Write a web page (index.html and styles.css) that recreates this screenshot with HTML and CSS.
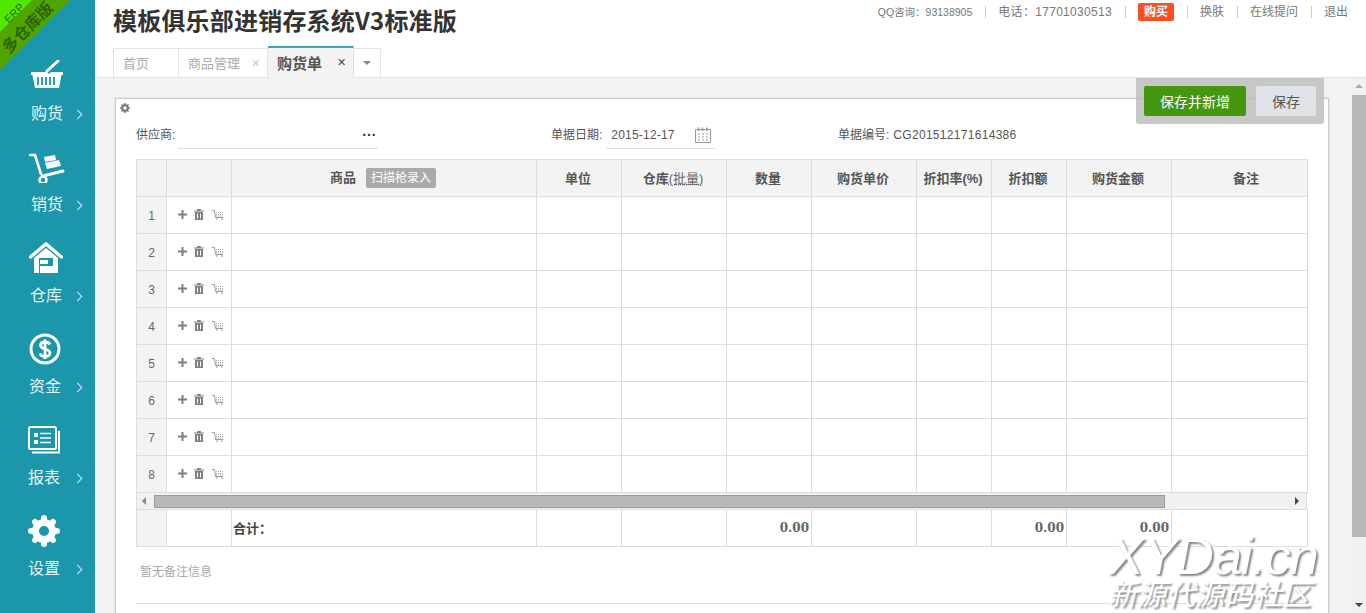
FILE: index.html
```html
<!DOCTYPE html>
<html lang="zh-CN">
<head>
  <meta charset="UTF-8">
  <title>模板俱乐部进销存系统V3标准版</title>
  <link rel="stylesheet" href="styles.css">
</head>
<body>

  <aside class="sidebar">
    <div class="ribbon">
      <svg width="70" height="70" viewBox="0 0 70 70"><path d="M0 0H70L0 70Z" fill="#4fa600"/><path d="M0 0H32L0 32Z" fill="#4fe800"/></svg>
      <span class="ribbon-erp">ERP</span>
      <span class="ribbon-text">多仓库版</span>
    </div>
    <nav class="nav">
      <a class="nav-item">
        <svg class="nav-icon" width="34" height="30" viewBox="0 2 34 30"><path d="M1 13H33V16H31.500L29 29H5L2.500 16H1Z" fill="#fff"/><path d="M17 13L28 1.500" stroke="#1b96ab" stroke-width="6"/><path d="M17 12L28 2" stroke="#fff" stroke-width="3" stroke-linecap="round"/><path d="M8 18V26M12 18V26M16 18V26M20 18V26M24 18V26" stroke="#1b96ab" stroke-width="1.800"/></svg>
        <span class="nav-label">购货</span><i class="chev"></i>
      </a>
      <a class="nav-item">
        <svg class="nav-icon" width="36" height="32" viewBox="0 -2 36 32"><path d="M1 2H6L12 21" fill="none" stroke="#fff" stroke-width="2.600" stroke-linecap="round"/><path d="M14 23L34 18" stroke="#fff" stroke-width="3" stroke-linecap="round"/><path d="M15 4L26 2L27 7L16 9Z M16 10L30 7L32 13L18 16Z" fill="#fff"/><circle cx="14" cy="27" r="3.500" fill="none" stroke="#fff" stroke-width="2.500"/></svg>
        <span class="nav-label">销货</span><i class="chev"></i>
      </a>
      <a class="nav-item">
        <svg class="nav-icon" width="34" height="32" viewBox="0 0 34 32"><path d="M1.500 15L17 2L32.500 15" fill="none" stroke="#fff" stroke-width="3.500" stroke-linecap="round"/><path d="M5 16L17 6L29 16V31H5Z" fill="#fff"/><path d="M10 16H24V31H10Z" fill="#1b96ab"/><path d="M11 18H19V22H11ZM11 24H24V31H11Z" fill="#fff"/></svg>
        <span class="nav-label">仓库</span><i class="chev"></i>
      </a>
      <a class="nav-item">
        <svg class="nav-icon" width="32" height="32" viewBox="0 0 32 32"><circle cx="16" cy="16" r="14" fill="none" stroke="#fff" stroke-width="3"/><path d="M21 11.500C20 9.500 18 9 16 9C13 9 11.500 10.500 11.500 12.500C11.500 17 21 15 21 20C21 22 19 23.500 16 23.500C13.500 23.500 11.500 22.500 11 20.500M16 6.500V26" fill="none" stroke="#fff" stroke-width="2.800"/></svg>
        <span class="nav-label">资金</span><i class="chev"></i>
      </a>
      <a class="nav-item">
        <svg class="nav-icon" width="32" height="28" viewBox="0 0 32 28"><rect x="1" y="1" width="27" height="22" rx="1.500" fill="none" stroke="#fff" stroke-width="2"/><path d="M31 5V26.500H4" fill="none" stroke="#fff" stroke-width="2"/><path d="M6 7H10V11H6ZM6 14H10V18H6Z" fill="#fff"/><path d="M12 7.500H23M12 12H23M12 16.500H23" stroke="#fff" stroke-width="1.300"/></svg>
        <span class="nav-label">报表</span><i class="chev"></i>
      </a>
      <a class="nav-item">
        <svg class="nav-icon" width="34" height="32" viewBox="0 0 34 32"><circle cx="17" cy="16" r="8.500" fill="none" stroke="#fff" stroke-width="7"/><g stroke="#fff" stroke-width="6" stroke-linecap="round"><path d="M17 3V5M17 27V29M4 16H6M28 16H30M8 7L9.500 8.500M24.500 23.500L26 25M26 7L24.500 8.500M9.500 23.500L8 25"/></g></svg>
        <span class="nav-label">设置</span><i class="chev"></i>
      </a>
    </nav>
  </aside>

  <div class="main">
    <header class="header">
      <div class="header-top">
        <h1 class="title">模板俱乐部进销存系统V3标准版</h1>
        <ul class="top-links">
          <li class="small">QQ咨询：93138905</li>
          <li class="phone">电话：17701030513</li>
          <li><span class="buy">购买</span></li>
          <li>换肤</li>
          <li>在线提问</li>
          <li>退出</li>
        </ul>
      </div>
      <div class="tabs">
        <a class="tab tab-home">首页</a>
        <a class="tab tab-goods">商品管理<i class="tab-x">✕</i></a>
        <a class="tab tab-active">购货单<i class="tab-x">✕</i></a>
        <a class="tab tab-more"><i class="caret"></i></a>
      </div>
    </header>

    <div class="content">
      <div class="page">
        <div class="card">
          <svg class="gear" width="10" height="10" viewBox="0 0 10 10"><circle cx="5" cy="5" r="2.800" fill="none" stroke="#777" stroke-width="2"/><path d="M5 0V10M0 5H10M1.500 1.500L8.500 8.500M8.500 1.500L1.500 8.500" stroke="#777" stroke-width="1.500" stroke-dasharray="2 6 2"/></svg>
          <div class="bill-row">
            <div class="field field-supplier">
              <label>供应商:</label>
              <div class="line-input supplier-input"><span class="dots">···</span></div>
            </div>
            <div class="field field-date">
              <label>单据日期:</label>
              <div class="line-input date-input">
                <span class="date-val">2015-12-17</span>
                <svg width="16" height="16" viewBox="0 0 16 16"><path d="M.5 2.500H15.500V15.500H.5Z" fill="none" stroke="#999"/><path d="M3.500 .5V4M7.500 .5V4M12 .5V4" stroke="#999" stroke-width="1.500"/><path d="M3 7H5M7 7H9M11 7H13M3 10H5M7 10H9M11 10H13M3 13H5M7 13H9M11 13H13" stroke="#999"/></svg>
              </div>
            </div>
            <div class="field field-no">
              <label>单据编号:</label>
              <span>CG201512171614386</span>
            </div>
          </div>

          <table class="grid grid-head">
            <colgroup><col class="c-no"><col class="c-op"><col class="c-goods"><col class="c-unit"><col class="c-store"><col class="c-qty"><col class="c-price"><col class="c-rate"><col class="c-disc"><col class="c-amount"><col class="c-note"></colgroup>
            <thead>
              <tr>
                <th></th><th></th>
                <th>商品<span class="scan">扫描枪录入</span></th>
                <th>单位</th>
                <th>仓库<span class="batch">(批量)</span></th>
                <th>数量</th><th>购货单价</th><th>折扣率(%)</th><th>折扣额</th><th>购货金额</th><th class="th-note">备注</th>
              </tr>
            </thead>
            <tbody id="rows"></tbody>
          </table>

          <div class="hscroll">
            <span class="arrow-left"></span>
            <div class="hscroll-thumb"></div>
            <span class="arrow-right"></span>
          </div>

          <table class="grid grid-foot">
            <colgroup><col class="c-no"><col class="c-op"><col class="c-goods"><col class="c-unit"><col class="c-store"><col class="c-qty"><col class="c-price"><col class="c-rate"><col class="c-disc"><col class="c-amount"><col class="c-note"></colgroup>
            <tr>
              <td class="num"></td><td></td>
              <td class="sum-label">合计：</td>
              <td></td><td></td>
              <td class="sum">0.00</td>
              <td></td><td></td>
              <td class="sum">0.00</td>
              <td class="sum">0.00</td>
              <td></td>
            </tr>
          </table>

          <p class="remark">暂无备注信息</p>
        </div>
      </div>

      <div class="vscroll">
        <span class="arrow-up"></span>
        <div class="vscroll-thumb"></div>
        <span class="arrow-down"></span>
      </div>

      <div class="save-bar">
        <button class="btn btn-green">保存并新增</button>
        <button class="btn btn-gray">保存</button>
      </div>
    </div>
  </div>

  <div class="watermark">
    <div class="wm-big">XYDai.cn</div>
    <div class="wm-small">新源代源码社区</div>
  </div>

  <script>
    const rows = document.getElementById('rows');
    const ops = `
      <svg width="9" height="9" viewBox="0 0 9 9"><path d="M4.500 0V9M0 4.500H9" stroke="#808080" stroke-width="2"/></svg>
      <svg width="10" height="11" viewBox="0 0 10 11"><path d="M0 2H10M3.500 1.500V.5H6.500V1.500" stroke="#808080" stroke-width="1"/><path d="M1 3H9V11H1Z" fill="#808080"/><path d="M3.500 4.500V9.500M6.500 4.500V9.500" stroke="#fff"/></svg>
      <svg width="12" height="10" viewBox="0 0 12 10"><path d="M0 .5H2.500L3.500 7.500H11" fill="none" stroke="#999"/><path d="M4 2.500H12M4 4.500H12M4 6H12" stroke="#aaa" stroke-dasharray="1 1"/><path d="M4 9H6M9 9H11" stroke="#999"/></svg>`;
    for (let i = 1; i <= 8; i++) {
      let cells = '<td class="num">' + i + '</td><td class="ops">' + ops + '</td>';
      for (let j = 0; j < 9; j++) cells += '<td></td>';
      rows.insertAdjacentHTML('beforeend', '<tr>' + cells + '</tr>');
    }
  </script>

</body>
</html>
```

FILE: styles.css
```css
* { box-sizing: border-box; }
html, body { height: 100%; }
body { margin: 0; display: flex; height: 613px; overflow: hidden; font-family: "Liberation Sans", "Noto Sans CJK SC", sans-serif; font-size: 12px; color: #555; background: #fff; }
ul { list-style: none; margin: 0; padding: 0; }
i { font-style: normal; }

/* sidebar */
.sidebar { width: 95px; flex: none; background: #1b96ab; position: relative; overflow: hidden; }
.ribbon { position: absolute; left: 0; top: 0; width: 70px; height: 70px; }
.ribbon svg { display: block; }
.ribbon-erp { position: absolute; left: -1px; top: 7px; width: 30px; text-align: center; line-height: 12px; transform: rotate(-45deg); font-size: 11px; color: #2b7000; }
.ribbon-text { position: absolute; left: -6px; top: 17px; width: 68px; text-align: center; line-height: 22px; transform: rotate(-45deg); font-size: 16px; font-weight: bold; color: #2c6408; white-space: nowrap; }
.nav { padding-top: 60px; display: flex; flex-direction: column; }
.nav-item { height: 91px; display: flex; flex-direction: column; align-items: center; color: #e6f4f6; position: relative; }
.nav-item:nth-child(1), .nav-item:nth-child(2) { padding-right: 1px; }
.nav-item:nth-child(3) { padding-right: 3px; }
.nav-item:nth-child(4) { padding-right: 5px; }
.nav-item:nth-child(5), .nav-item:nth-child(6) { padding-right: 7px; }
.nav-icon { display: block; height: 32px; }
.nav-label { display: block; margin-top: 11px; font-size: 16px; line-height: 22px; white-space: nowrap; }
.chev { position: absolute; left: 74px; top: 51px; width: 7px; height: 7px; border-top: 1px solid #d5e9ed; border-right: 1px solid #d5e9ed; transform: rotate(45deg); }

/* header */
.main { flex: 1; min-width: 0; display: flex; flex-direction: column; }
.header { height: 78px; flex: none; border-bottom: 1px solid #e3e3e3; padding-left: 18px; display: flex; flex-direction: column; justify-content: space-between; }
.header-top { display: flex; justify-content: space-between; align-items: flex-start; }
.title { margin: 5px 0 0; font-size: 24px; line-height: 30px; font-weight: bold; letter-spacing: .2px; color: #333; font-family: "Noto Sans CJK SC", sans-serif; }
.top-links { display: flex; align-items: center; margin: 3px 18px 0 0; color: #777; height: 17px; }
.top-links li { padding: 0 13px 0 12px; border-left: 1px solid #ccc; line-height: 12px; white-space: nowrap; }
.top-links li:first-child { border-left: 0; }
.top-links li:last-child { padding-right: 0; }
.top-links .small { font-size: 10.500px; }
.top-links .phone { letter-spacing: .3px; }
.buy { display: inline-block; background: #fb5022; color: #fff; font-weight: bold; padding: 0 6px; height: 18px; line-height: 18px; margin: -3px 0; border-radius: 2px; font-size: 12px; }

.tabs { display: flex; align-items: flex-end; height: 32px; }
.tab { height: 29px; display: flex; align-items: center; padding-bottom: 2px; border: 1px solid #e3e3e3; border-bottom: 0; border-left: 0; color: #aaa; font-size: 13px; padding-left: 9px; position: relative; }
.tab-home { width: 66px; border-left: 1px solid #e3e3e3; border-radius: 2px 0 0 0; }
.tab-goods { width: 89px; }
.tab-active { width: 86px; height: 32px; background: #f3f3f3; border-top: 2px solid #3aa9bf; border-right: 1px solid #e3e3e3; color: #555; font-size: 15px; font-weight: bold; margin-bottom: -1px; }
.tab-more { width: 27px; border-radius: 0 2px 0 0; justify-content: center; padding: 0; }
.tab-x { position: absolute; right: 7px; top: 8px; font-size: 11px; color: #b9cde3; }
.tab-active .tab-x { color: #444; font-weight: normal; top: 8px; }
.caret { width: 0; height: 0; border: 4px solid transparent; border-top-color: #888; border-bottom: 0; }

/* content */
.content { flex: 1; min-height: 0; display: flex; background: #f3f3f3; position: relative; }
.page { flex: 1; min-width: 0; padding: 20px 22px 0 20px; overflow: hidden; }
.card { background: #fff; border: 1px solid #ccc; border-bottom: 0; box-shadow: 0 0 2px #ccc; height: 520px; padding: 0 21px 0 20px; position: relative; }
.gear { position: absolute; left: 4px; top: 4px; }
.bill-row { display: flex; height: 60px; align-items: flex-start; padding-top: 22px; }
.field { display: flex; align-items: flex-start; line-height: 28px; white-space: nowrap; }
.field label { color: #555; }
.line-input { border-bottom: 1px solid #d7dee5; height: 28px; display: flex; align-items: center; justify-content: space-between; }
.field-supplier { width: 415px; }
.supplier-input { width: 200px; margin-left: 3px; padding-right: 2px; justify-content: flex-end; }
.dots { font-weight: bold; color: #333; font-size: 14px; }
.field-date { width: 287px; }
.date-input { width: 110px; margin-left: 4px; padding: 0 5px; }
.date-val { letter-spacing: .2px; }
.field-no span { margin-left: 4px; letter-spacing: .3px; }
.grid { border-collapse: collapse; table-layout: fixed; width: 1171px; }
.c-no { width: 30px; } .c-op { width: 65px; } .c-goods { width: 305px; } .c-unit { width: 85px; } .c-store { width: 105px; }
.c-qty { width: 85px; } .c-price { width: 105px; } .c-rate { width: 75px; } .c-disc { width: 75px; } .c-amount { width: 105px; } .c-note { width: 136px; }
.grid th, .grid td { border: 1px solid #d7dee5; padding: 0; height: 37px; }
.grid th { background: #f3f3f3; font-size: 13px; color: #555; font-weight: bold; padding: 0 2px 1px 0; }
.grid .th-note { padding-left: 15px; }
.num { background: #f3f3f3; text-align: center; color: #666; padding-top: 2px !important; }
.ops { padding-left: 11px !important; padding-bottom: 2px !important; white-space: nowrap; }
.ops svg { margin-right: 4px; vertical-align: middle; }
.scan { display: inline-block; margin-left: 10px; padding: 0 5px; height: 20px; line-height: 20px; background: #aaa; color: #fff; font-weight: normal; font-size: 12px; border-radius: 2px; }
.batch { font-weight: normal; color: #666; text-decoration: underline dotted; }
.hscroll { width: 1171px; height: 16px; background: #f1f1f1; border: 1px solid #d7dee5; border-top: 0; border-bottom: 0; display: flex; align-items: center; position: relative; }
.hscroll-thumb { width: 1011px; height: 13px; margin-left: 17px; background: #b9b9b9; border: 1px solid #9a9a9a; }
.arrow-left, .arrow-right { position: absolute; width: 0; height: 0; border: 4px solid transparent; }
.arrow-left { left: 5px; border-right-color: #888; border-left: 0; }
.arrow-right { right: 7px; border-left-color: #444; border-right: 0; }
.sum { text-align: right; padding-right: 2px !important; font-family: "DejaVu Serif", serif; font-weight: bold; font-size: 12px; color: #666; }
.sum-label { font-weight: bold; font-size: 13px; color: #444; padding: 0 0 2px 1px !important; }
.remark { margin: 0; height: 57px; padding: 17px 4px 0; border-bottom: 1px solid #d7dee5; width: 1171px; color: #aaa; line-height: 16px; }

/* scrollbar */
.vscroll { width: 15px; flex: none; background: #f1f1f1; position: relative; }
.vscroll-thumb { position: absolute; left: 1px; right: 0; top: 17px; height: 442px; background: #b9b9b9; }
.arrow-up, .arrow-down { position: absolute; left: 4px; width: 0; height: 0; border: 4px solid transparent; }
.arrow-up { top: 6px; border-bottom-color: #aaa; border-top: 0; }
.arrow-down { bottom: 6px; border-top-color: #444; border-bottom: 0; }

/* fixed save buttons */
.save-bar { position: absolute; right: 42px; top: 0; width: 188px; height: 46px; padding: 8px 8px; display: flex; justify-content: space-between; background: rgba(190, 190, 190, .85); border-radius: 0 0 3px 3px; }
.btn { height: 30px; border: 0; border-radius: 2px; font-family: "Liberation Sans", "Noto Sans CJK SC", sans-serif; font-size: 14px; }
.btn-green { width: 102px; background: #459611; color: #fff; }
.btn-gray { width: 60px; background: #dfe2e6; color: #555; }

/* watermark */
.watermark { position: absolute; left: 1108px; top: 535px; color: #fff; text-shadow: 2px 2px 2px #888; white-space: nowrap; }
.wm-big { font-family: "Liberation Sans", sans-serif; font-style: italic; font-size: 52px; line-height: 43px; letter-spacing: -1px; padding-left: 1px; }
.wm-small { font-size: 29px; line-height: 28px; font-style: italic; font-family: "Noto Sans CJK SC", sans-serif; }
```
